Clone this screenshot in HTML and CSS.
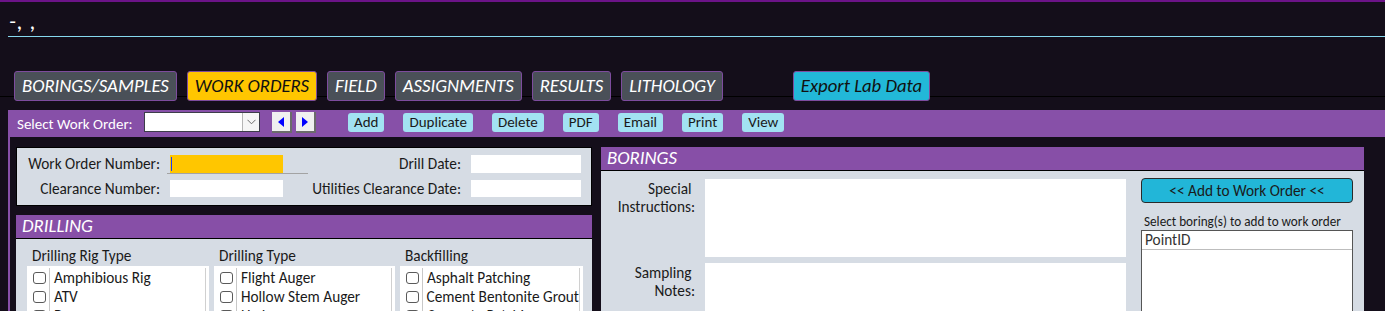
FILE: index.html
```html
<!DOCTYPE html>
<html lang="en">
<head>
<meta charset="utf-8">
<title>Work Orders</title>
<link rel="stylesheet" href="styles.css">
</head>
<body>
<header class="titlebar">
  <div class="title">-, ,</div>
  <div class="rule"></div>
</header>

<nav class="tabs">
  <span class="tab">BORINGS/SAMPLES</span>
  <span class="tab tab-active">WORK ORDERS</span>
  <span class="tab">FIELD</span>
  <span class="tab">ASSIGNMENTS</span>
  <span class="tab">RESULTS</span>
  <span class="tab">LITHOLOGY</span>
  <span class="tab tab-export">Export Lab Data</span>
</nav>

<div class="toolbar">
  <span class="tb-label">Select Work Order:</span>
  <span class="combo"><span class="combo-text"></span><span class="combo-btn"><svg width="9" height="6" viewBox="0 0 9 6"><path d="M0.5 0.8 L4.5 4.8 L8.5 0.8" fill="none" stroke="#6e6e6e" stroke-width="1"/></svg></span></span>
  <span class="nav-btn nav-first"><svg width="6" height="10" viewBox="0 0 6 10"><path d="M6 0 L0 5 L6 10 Z" fill="#0000ff"/></svg></span>
  <span class="nav-btn"><svg width="6" height="10" viewBox="0 0 6 10"><path d="M0 0 L6 5 L0 10 Z" fill="#0000ff"/></svg></span>
  <span class="actions">
    <span class="act">Add</span>
    <span class="act">Duplicate</span>
    <span class="act">Delete</span>
    <span class="act">PDF</span>
    <span class="act">Email</span>
    <span class="act">Print</span>
    <span class="act">View</span>
  </span>
</div>

<main class="main">
  <div class="leftcol">
    <section class="info">
      <label class="lbl">Work Order Number:</label>
      <div class="wo-wrap"><div class="wo-field"><span class="caret"></span></div></div>
      <label class="lbl">Drill Date:</label>
      <div class="field field-a"></div>
      <label class="lbl">Clearance Number:</label>
      <div class="field field-b"></div>
      <label class="lbl">Utilities Clearance Date:</label>
      <div class="field field-b"></div>
    </section>

    <section class="panel">
      <h2 class="panel-head">DRILLING</h2>
      <div class="panel-body drill-body">
        <div class="drill-col">
          <div class="col-head">Drilling Rig Type</div>
          <div class="list">
            <div class="list-inner">
              <div class="row"><span class="cb"></span><span class="opt">Amphibious Rig</span></div>
              <div class="row"><span class="cb"></span><span class="opt">ATV</span></div>
              <div class="row"><span class="cb"></span><span class="opt">Buggy</span></div>
            </div>
          </div>
        </div>
        <div class="drill-col">
          <div class="col-head">Drilling Type</div>
          <div class="list">
            <div class="list-inner">
              <div class="row"><span class="cb"></span><span class="opt">Flight Auger</span></div>
              <div class="row"><span class="cb"></span><span class="opt">Hollow Stem Auger</span></div>
              <div class="row"><span class="cb"></span><span class="opt">Hydrovac</span></div>
            </div>
          </div>
        </div>
        <div class="drill-col">
          <div class="col-head">Backfilling</div>
          <div class="list">
            <div class="list-inner">
              <div class="row"><span class="cb"></span><span class="opt">Asphalt Patching</span></div>
              <div class="row"><span class="cb"></span><span class="opt">Cement Bentonite Grout</span></div>
              <div class="row"><span class="cb"></span><span class="opt">Concrete Patching</span></div>
            </div>
          </div>
        </div>
      </div>
    </section>
  </div>

  <section class="panel borings">
    <h2 class="panel-head">BORINGS</h2>
    <div class="panel-body borings-body">
      <div class="notes">
        <label class="note-lbl">Special&nbsp;<br>Instructions:</label>
        <div class="memo memo-1"></div>
        <label class="note-lbl">Sampling&nbsp;<br>Notes:</label>
        <div class="memo memo-2"></div>
      </div>
      <div class="side">
        <div class="add-btn">&lt;&lt; Add to Work Order &lt;&lt;</div>
        <div class="caption">Select boring(s) to add to work order</div>
        <div class="pick-list">
          <div class="pick-head">PointID</div>
        </div>
      </div>
    </div>
  </section>
</main>
</body>
</html>
```

FILE: styles.css
```css
* { box-sizing: border-box; }

html, body {
  margin: 0;
  padding: 0;
  height: 311px;
  overflow: hidden;
}

body {
  background: #140e1a;
  border-top: 2px solid #6c1388;
  font-family: Carlito, Calibri, Lato, "Liberation Sans", sans-serif;
  font-size: 15.3px;
  color: #1a1a1a;
}

/* title */
.titlebar { height: 35px; }
.title {
  height: 34px;
  padding: 8px 0 0 9px;
  color: #ffffff;
  font-size: 23px;
  line-height: 22px;
  font-style: italic;
  letter-spacing: 1px;
}
.rule {
  margin-left: 8px;
  height: 1px;
  background: #86d8ee;
}

/* tabs */
.tabs {
  margin-top: 34px;
  height: 30px;
  display: flex;
  gap: 10px;
  padding-left: 14px;
  background: linear-gradient(to bottom, transparent 25px, #000 25px, #000 26px, transparent 26px);
}
.tab {
  height: 30px;
  display: flex;
  align-items: center;
  padding: 0 7px 2px 7px;
  background: #4a5058;
  border: 1px solid #7d4c9e;
  border-radius: 3px;
  color: #ffffff;
  font-style: italic;
  font-size: 18.7px;
}
.tab-active {
  background: #ffc600;
  color: #111;
}
.tab-export {
  margin-left: 60px;
  background: #22b8d8;
  color: #111;
}

/* toolbar */
.toolbar {
  margin: 9px 0 0 8px;
  height: 27px;
  background: #8750a8;
  display: flex;
  align-items: center;
  padding-left: 9px;
}
.tb-label {
  color: #fff;
  font-size: 15px;
  width: 127px;
}
.combo {
  width: 116px;
  height: 20px;
  background: #fff;
  border: 1px solid #3d3d4a;
  display: flex;
  margin-top: -3px;
}
.combo-text { flex: 1; }
.combo-btn {
  width: 17px;
  border-left: 1px solid #b5b5b5;
  background: #f6f6f6;
  display: flex;
  align-items: center;
  justify-content: center;
}
.nav-btn {
  width: 20px;
  height: 21px;
  background: #f0f0f0;
  border-right: 2px solid #6b6b6b;
  border-bottom: 2px solid #6b6b6b;
  display: flex;
  align-items: center;
  justify-content: center;
  margin-left: 4px;
  margin-top: -2px;
}
.nav-first { margin-left: 12px; }
.actions {
  display: flex;
  gap: 19px;
  margin-left: 32px;
  margin-top: -3px;
}
.act {
  height: 19px;
  padding: 0 6px;
  background: #a2e2f2;
  border-radius: 3px;
  display: flex;
  align-items: center;
  color: #1a1a1a;
  font-size: 15px;
}

/* main area */
.main {
  margin-left: 8px;
  border-left: 2px solid #8750a8;
  padding: 10px 0 0 6px;
  display: flex;
  gap: 9px;
  align-items: flex-start;
  height: 200px;
}
.leftcol {
  width: 576px;
  display: flex;
  flex-direction: column;
  gap: 9px;
}

.info {
  height: 59px;
  background: #d6dce4;
  border: 1px solid #000;
  display: grid;
  grid-template-columns: 153px 113px 188px 110px;
  grid-auto-rows: 18px;
  row-gap: 7px;
  padding-top: 7px;
}
.lbl {
  text-align: right;
  padding-right: 10px;
  line-height: 18px;
  white-space: nowrap;
}
.wo-wrap {
  width: 141px;
  margin: 0 -28px 0 -3px;
  padding-left: 3px;
  border-bottom: 1px solid #a3a3a3;
  height: 19px;
}
.wo-field {
  width: 113px;
  height: 18px;
  background: #ffc600;
  padding: 2px 0 0 1px;
}
.caret {
  display: block;
  width: 1px;
  height: 14px;
  background: #1f3cff;
}
.field {
  background: #fff;
  height: 18px;
}
.field-b { height: 17px; }

/* panels */
.panel {
  display: flex;
  flex-direction: column;
}
.panel-head {
  margin: 0;
  height: 24px;
  background: #874fa7;
  border-bottom: 1px solid #000;
  color: #fff;
  font-size: 18.8px;
  font-style: italic;
  font-weight: normal;
  line-height: 22px;
  padding-left: 6px;
}
.panel-body {
  background: #d6dce4;
  height: 200px;
}

.drill-body {
  display: grid;
  grid-template-columns: 182px 181px 183px;
  column-gap: 5px;
  padding: 8px 0 0 11px;
  align-content: start;
}
.col-head {
  padding-left: 5px;
  line-height: 18px;
  height: 19px;
}
.list {
  background: #fff;
  height: 60px;
  padding: 2px 3px 0 0;
}
.list-inner {
  border-right: 1px solid #d0d0d0;
  height: 100%;
}
.row {
  display: flex;
  align-items: stretch;
  height: 19px;
}
.cb {
  width: 13px;
  height: 12px;
  margin: 4px 3px 0 6px;
  border: 1px solid #5a5a5a;
  border-radius: 3px;
  background: #fff;
}
.opt {
  border-left: 1px solid #c8c8c8;
  padding-left: 4px;
  line-height: 19px;
  white-space: nowrap;
  color: #1a1a1a;
}

/* borings */
.borings { width: 763px; }
.borings-body {
  display: flex;
  padding: 8px 0 0 0;
  gap: 15px;
}
.notes {
  display: grid;
  grid-template-columns: 94px 421px;
  column-gap: 10px;
  grid-template-rows: 78px 60px;
  row-gap: 6px;
}
.note-lbl {
  text-align: right;
  line-height: 18px;
  padding-top: 1px;
}
.memo { background: #fff; }
.side {
  width: 212px;
  margin-top: -1px;
  display: flex;
  flex-direction: column;
}
.add-btn {
  height: 25px;
  background: #22b6d8;
  border: 1px solid #2a2a2a;
  border-radius: 4px;
  text-align: center;
  line-height: 23px;
  color: #1a1a1a;
  font-size: 15.3px;
}
.caption {
  margin-top: 11px;
  padding-left: 3px;
  font-size: 13.2px;
  line-height: 15px;
  white-space: nowrap;
}
.pick-list {
  margin-top: 1px;
  height: 120px;
  background: #fff;
  border: 1px solid #555;
}
.pick-head {
  height: 19px;
  border-bottom: 1px solid #bdbdbd;
  padding-left: 3px;
  line-height: 18px;
  color: #333;
}
```
